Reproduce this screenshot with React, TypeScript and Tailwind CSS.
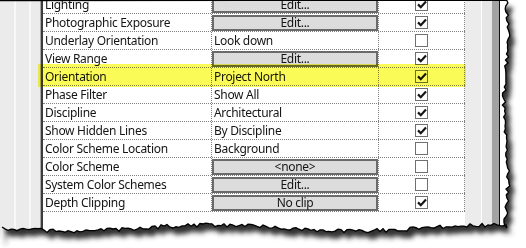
import React from "react";

type Row = {
  name: string;
  value: string;
  button?: boolean;
  checked: boolean;
};

const rows: Row[] = [
  { name: "Lighting", value: "Edit...", button: true, checked: true },
  { name: "Photographic Exposure", value: "Edit...", button: true, checked: true },
  { name: "Underlay Orientation", value: "Look down", checked: false },
  { name: "View Range", value: "Edit...", button: true, checked: true },
  { name: "Orientation", value: "Project North", checked: true },
  { name: "Phase Filter", value: "Show All", checked: true },
  { name: "Discipline", value: "Architectural", checked: true },
  { name: "Show Hidden Lines", value: "By Discipline", checked: true },
  { name: "Color Scheme Location", value: "Background", checked: false },
  { name: "Color Scheme", value: "<none>", button: true, checked: false },
  { name: "System Color Schemes", value: "Edit...", button: true, checked: false },
  { name: "Depth Clipping", value: "No clip", button: true, checked: true },
];

// jagged "torn paper" edge, seeded so it is the same on every render
function seeded(seed: number) {
  let s = seed;
  return () => {
    s = (s * 9301 + 49297) % 233280;
    return s / 233280;
  };
}

const rand = seeded(11);
const rightEdge: [number, number][] = [];
for (let y = 0; y <= 228; y += 3) {
  rightEdge.push([506 + 2 * Math.sin(y / 23) + (rand() - 0.5) * 4, y]);
}
const bottomEdge: [number, number][] = [];
for (let x = 506; x >= 0; x -= 3) {
  bottomEdge.push([x, 228 + 3 * Math.sin(x / 45) + (rand() - 0.5) * 4]);
}
const tornPts = [...rightEdge, ...bottomEdge].map(([x, y]) => `${x.toFixed(1)},${y.toFixed(1)}`).join(" L");
const paperPath = `M0,0 L${tornPts} L0,240 Z`;
const edgePath = `M0,0.5 L${tornPts}`;

function CheckBox({ checked }: { checked: boolean }) {
  return (
    <div className="flex h-[13px] w-[13px] items-center justify-center border border-[#707070] bg-white">
      {checked && (
        <svg width="10" height="9" viewBox="0 0 10 9">
          <path d="M1 4.4 L3.8 7.2 L9 1.6" fill="none" stroke="#161616" strokeWidth="2.2" />
        </svg>
      )}
    </div>
  );
}

function PropertyRow({ row }: { row: Row }) {
  return (
    <div className="flex h-[18px] border-b border-dotted border-[#808080]">
      <div className="flex w-[169px] items-center border-r border-dotted border-[#808080] pl-[2px]">
        {row.name}
      </div>
      <div className="flex w-[167px] items-center border-r border-dotted border-[#808080]">
        {row.button ? (
          <div className="flex h-[16px] w-[166px] items-center justify-center border-2 border-[#6a6a6a] bg-[#dcdcdc] leading-none">
            {row.value}
          </div>
        ) : (
          <span className="pl-[2px]">{row.value}</span>
        )}
      </div>
      <div className="flex w-[86px] items-center justify-center border-r border-dotted border-[#808080]">
        <CheckBox checked={row.checked} />
      </div>
    </div>
  );
}

export default function App() {
  return (
    <div
      className="relative h-[248px] w-[526px] overflow-hidden bg-white text-[12px] text-[#141414]"
      style={{ fontFamily: '"Noto Sans", "Open Sans", sans-serif' }}
    >
      <div className="flex h-[240px] w-[500px]">
        {/* left gutter */}
        <div className="flex w-[43px] bg-[#ebebeb]">
          <div className="w-[14px]" />
          <div className="w-[2px] bg-[#f8f8f8]" />
          <div className="w-[13px]" />
          <div className="w-[2px] bg-[#f8f8f8]" />
          <div className="w-[9px]" />
          <div className="w-[1px] bg-[#a8a8a8]" />
          <div className="w-[2px] bg-[#3c3c3c]" />
        </div>

        {/* grid */}
        <div className="flex w-[422px] flex-col bg-white">
          <div className="-mt-[4px] tracking-[-0.3px]">
            {rows.map((row) => (
              <PropertyRow key={row.name} row={row} />
            ))}
          </div>
        </div>

        {/* scroll strip */}
        <div className="flex w-[35px]">
          <div className="w-[16px] bg-[#ececec]" />
          <div className="w-[1px] bg-white" />
          <div className="w-[10px] bg-[#e6e6e6]" />
          <div className="w-[7px] bg-[#a3a3a3]" />
          <div className="w-[1px] bg-[#111]" />
        </div>
      </div>

      {/* highlighter mark */}
      <div className="pointer-events-none absolute left-[38px] top-[64px] h-[23px] w-[428px] bg-[#fbfb58] mix-blend-multiply" />

      {/* torn edge + shadow */}
      <svg className="pointer-events-none absolute inset-0" width="526" height="248">
        <defs>
          <filter id="blur" x="-10%" y="-10%" width="120%" height="120%">
            <feGaussianBlur stdDeviation="2.8" />
          </filter>
          <mask id="outside">
            <rect width="526" height="248" fill="white" />
            <path d={paperPath} fill="black" />
          </mask>
        </defs>
        <g mask="url(#outside)">
          <rect width="526" height="248" fill="white" />
          <path d={paperPath} transform="translate(5,7)" fill="#333" filter="url(#blur)" />
        </g>
        <path d={edgePath} fill="none" stroke="#000" strokeWidth="1.3" />
      </svg>
    </div>
  );
}
